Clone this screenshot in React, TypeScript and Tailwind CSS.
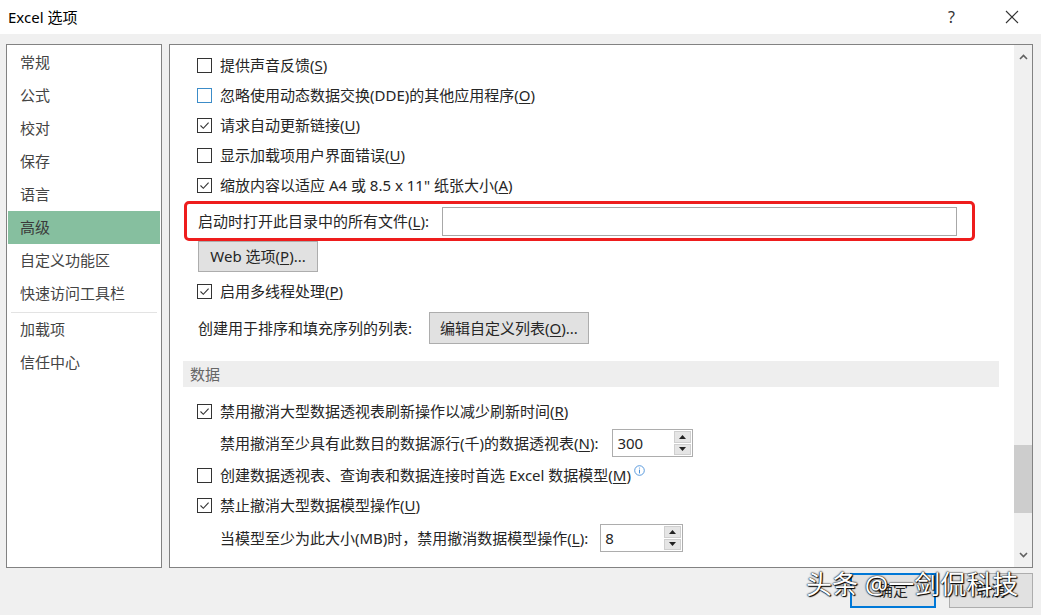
import React from 'react';

const font = "font-['Noto_Sans','Noto_Sans_CJK_SC',sans-serif]";

function Key({ k }: { k: string }) {
  return <span className="underline underline-offset-2 decoration-1">{k}</span>;
}

function Box({ checked, blue }: { checked?: boolean; blue?: boolean }) {
  return (
    <span
      className={
        blue
          ? 'w-[15px] h-[15px] border border-[#3c8cc8] bg-white flex items-center justify-center shrink-0'
          : 'w-[15px] h-[15px] border border-[#333333] bg-white flex items-center justify-center shrink-0'
      }
    >
      {checked && (
        <svg width="11" height="11" viewBox="0 0 11 11">
          <path d="M1.5 5.5 L4.3 8.3 L9.6 2.6" stroke="#333" fill="none" strokeWidth="1.1" />
        </svg>
      )}
    </span>
  );
}

function Check({ checked, blue, children }: { checked?: boolean; blue?: boolean; children: React.ReactNode }) {
  return (
    <div className="flex items-center h-[30px] gap-[8px]">
      <Box checked={checked} blue={blue} />
      <span className="leading-none whitespace-nowrap">{children}</span>
    </div>
  );
}

function Spin({ value, width }: { value: string; width: string }) {
  return (
    <div className={`${width} h-[28px] border border-[#adadad] bg-white flex items-stretch`}>
      <span className="flex-1 pl-[4px] flex items-center leading-none">{value}</span>
      <div className="w-[19px] flex flex-col gap-[1px] p-[1px]">
        <div className="flex-1 bg-[#e5e5e5] border border-[#cfcfcf] flex items-center justify-center">
          <svg width="7" height="4" viewBox="0 0 7 4"><path d="M0 4 L3.5 0 L7 4 Z" fill="#222" /></svg>
        </div>
        <div className="flex-1 bg-[#e5e5e5] border border-[#cfcfcf] flex items-center justify-center">
          <svg width="7" height="4" viewBox="0 0 7 4"><path d="M0 0 L3.5 4 L7 0 Z" fill="#222" /></svg>
        </div>
      </div>
    </div>
  );
}

const nav = ['常规', '公式', '校对', '保存', '语言', '高级', '自定义功能区', '快速访问工具栏'];
const nav2 = ['加载项', '信任中心'];

export default function App() {
  return (
    <div className={`relative w-[1041px] h-[615px] bg-[#f0f0f0] flex flex-col overflow-hidden text-[15px] text-[#262626] ${font}`}>
      {/* title bar */}
      <div className="h-[34px] bg-white flex items-center pl-[8px] shrink-0">
        <span className="text-[15px] text-black leading-none">Excel 选项</span>
        <span className="ml-auto text-[16px] text-[#333] leading-none mr-[50px]">?</span>
        <svg width="14" height="14" viewBox="0 0 14 14" className="mr-[22px]">
          <path d="M1 1 L13 13 M13 1 L1 13" stroke="#333" strokeWidth="1.1" />
        </svg>
      </div>

      {/* body */}
      <div className="flex gap-[7px] pl-[6px] pr-[8px] pt-[10px] shrink-0">
        {/* left nav */}
        <div className="w-[156px] h-[524px] border border-[#828282] bg-white pt-[1px] text-[#444]">
          {nav.map((n) => (
            <div
              key={n}
              className={
                n === '高级'
                  ? 'h-[33px] mx-[1px] pl-[12px] flex items-center bg-[#86bf9f] text-[#3a3a3a]'
                  : 'h-[33px] mx-[1px] pl-[12px] flex items-center'
              }
            >
              <span className="leading-none">{n}</span>
            </div>
          ))}
          <div className="h-px bg-[#e3e3e3] mx-[4px] mt-[2px]" />
          {nav2.map((n) => (
            <div key={n} className="h-[33px] pl-[13px] flex items-center">
              <span className="leading-none">{n}</span>
            </div>
          ))}
        </div>

        {/* right panel */}
        <div className="flex-1 h-[524px] border border-[#828282] bg-white flex">
          <div className="flex-1 pl-[27px] pr-[15px] pt-[5px] flex flex-col">
            <Check>提供声音反馈(<Key k="S" />)</Check>
            <Check blue>忽略使用动态数据交换(DDE)的其他应用程序(<Key k="O" />)</Check>
            <Check checked>请求自动更新链接(<Key k="U" />)</Check>
            <Check>显示加载项用户界面错误(<Key k="U" />)</Check>
            <Check checked>缩放内容以适应 A4 或 8.5 x 11" 纸张大小(<Key k="A" />)</Check>

            <div className="-ml-[13px] mr-[24px] mt-[1px] h-[40px] border-[3px] border-[#ee1d1d] rounded-[5px] flex items-center pl-[11px] pr-[15px] gap-[13px]">
              <span className="leading-none whitespace-nowrap">启动时打开此目录中的所有文件(<Key k="L" />):</span>
              <div className="flex-1 h-[29px] border border-[#a8a8a8] bg-white" />
            </div>

            <div className="ml-[1px] w-[120px] h-[31px] bg-[#e1e1e1] border border-[#adadad] flex items-center justify-center">
              <span className="leading-none">Web 选项(<Key k="P" />)...</span>
            </div>

            <div className="h-[38px] flex items-center">
              <div className="flex items-center gap-[8px]">
                <Box checked />
                <span className="leading-none">启用多线程处理(<Key k="P" />)</span>
              </div>
            </div>

            <div className="mt-[2px] h-[32px] flex items-center pl-[1px]">
              <span className="leading-none w-[231px]">创建用于排序和填充序列的列表:</span>
              <div className="w-[160px] h-[32px] bg-[#e1e1e1] border border-[#adadad] flex items-center justify-center">
                <span className="leading-none">编辑自定义列表(<Key k="O" />)...</span>
              </div>
            </div>

            <div className="-ml-[14px] mt-[17px] h-[26px] bg-[#eeeeee] flex items-center pl-[7px] text-[#666]">
              <span className="leading-none">数据</span>
            </div>

            <div className="mt-[9px]" />
            <Check checked>禁用撤消大型数据透视表刷新操作以减少刷新时间(<Key k="R" />)</Check>
            <div className="mt-[3px] h-[28px] flex items-center pl-[23px] gap-[14px]">
              <span className="leading-none whitespace-nowrap">禁用撤消至少具有此数目的数据源行(千)的数据透视表(<Key k="N" />):</span>
              <Spin value="300" width="w-[81px]" />
            </div>
            <div className="mt-[3px]" />
            <Check>
              创建数据透视表、查询表和数据连接时首选 Excel 数据模型(<Key k="M" />)
              <svg width="11" height="11" viewBox="0 0 11 11" className="inline-block ml-[3px] -translate-y-[6px]">
                <circle cx="5.5" cy="5.5" r="4.8" stroke="#4a90d9" fill="none" strokeWidth="0.9" />
                <path d="M5.5 4.6 V8.4" stroke="#4a90d9" strokeWidth="1" />
                <circle cx="5.5" cy="3" r="0.6" fill="#4a90d9" />
              </svg>
            </Check>
            <Check checked>禁止撤消大型数据模型操作(<Key k="U" />)</Check>
            <div className="mt-[4px] h-[28px] flex items-center pl-[23px] gap-[12px]">
              <span className="leading-none whitespace-nowrap">当模型至少为此大小(MB)时，禁用撤消数据模型操作(<Key k="L" />):</span>
              <Spin value="8" width="w-[83px]" />
            </div>
          </div>

          {/* scrollbar */}
          <div className="w-[18px] bg-[#f0f0f0] flex flex-col items-center">
            <div className="h-[22px] flex items-center justify-center pt-[2px]">
              <svg width="9" height="6" viewBox="0 0 9 6"><path d="M1 5 L4.5 1.5 L8 5" stroke="#606060" strokeWidth="1.6" fill="none" /></svg>
            </div>
            <div className="flex-1 w-full flex flex-col">
              <div className="h-[378px]" />
              <div className="h-[68px] w-full bg-[#cdcdcd]" />
            </div>
            <div className="h-[22px] flex items-center justify-center pb-[2px]">
              <svg width="9" height="6" viewBox="0 0 9 6"><path d="M1 1 L4.5 4.5 L8 1" stroke="#606060" strokeWidth="1.6" fill="none" /></svg>
            </div>
          </div>
        </div>
      </div>

      {/* bottom buttons */}
      <div className="flex justify-end gap-[13px] pr-[8px] pt-[5px]">
        <div className="w-[86px] h-[35px] bg-[#e1e1e1] border-2 border-[#0078d7] flex items-center justify-center">
          <span className="leading-none">确定</span>
        </div>
        <div className="w-[84px] h-[35px] bg-[#e1e1e1] border border-[#adadad] flex items-center justify-center">
          <span className="leading-none">取消</span>
        </div>
      </div>

      {/* watermark */}
      <div className="absolute left-[806px] top-[571px] text-[26px] text-white leading-none whitespace-nowrap [text-shadow:0_0_2px_#000,0_0_1px_#000,1px_1px_1px_#000]">
        头条 @一剑侃科技
      </div>
    </div>
  );
}
